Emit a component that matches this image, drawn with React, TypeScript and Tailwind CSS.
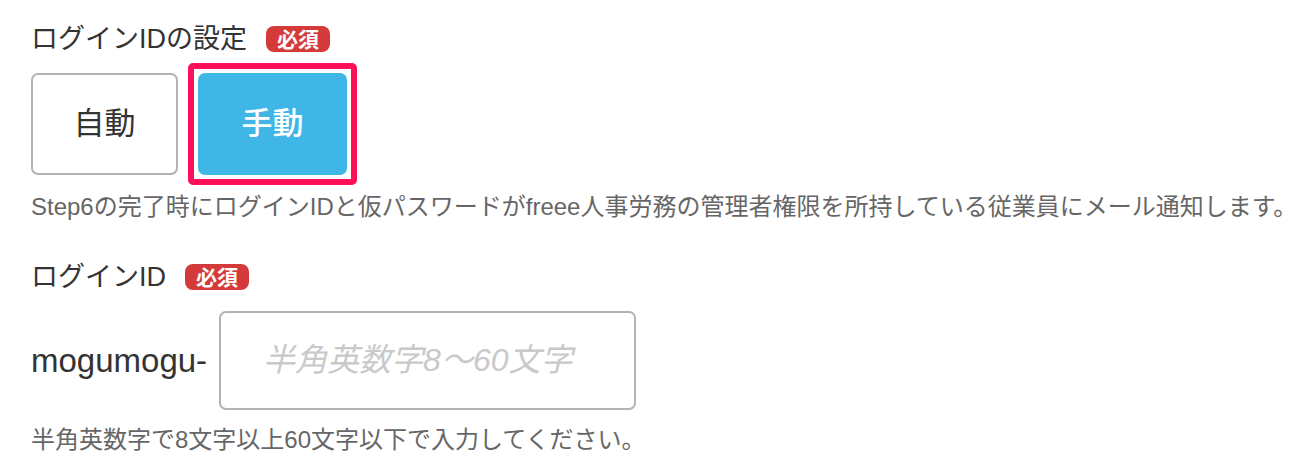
import React from "react";

const font = {
  fontFamily: '"Liberation Sans", "Noto Sans CJK JP", sans-serif',
};

function Required() {
  return (
    <span className="ml-[19px] inline-flex h-[26px] w-[64px] items-center justify-center rounded-[8px] bg-[#d43a3a] text-[21px] font-bold leading-none text-white">
      必須
    </span>
  );
}

export default function App() {
  return (
    <div
      className="min-h-[476px] w-[1314px] bg-white pl-[31px] pt-[20px] text-[#333333]"
      style={font}
    >
      {/* ログイン方法 */}
      <div className="flex h-[38px] items-center">
        <span className="text-[27px] leading-none">ログインIDの設定</span>
        <Required />
      </div>

      <div className="mt-[4px] flex h-[124px] items-center">
        <button className="flex h-[102px] w-[147px] items-center justify-center rounded-[7px] border-2 border-[#b3b3b3] bg-white text-[31px] text-[#333333]">
          自動
        </button>
        <div className="ml-[10px] rounded-[5px] border-[6px] border-[#fd0f5a] p-[4px]">
          <button className="flex h-[102px] w-[149px] items-center justify-center rounded-[7px] bg-[#40b6e7] text-[31px] font-medium text-white">
            手動
          </button>
        </div>
      </div>

      <p className="mt-[4px] flex h-[34px] items-center text-[24px] leading-none text-[#666666]">
        Step6の完了時にログインIDと仮パスワードがfreee人事労務の管理者権限を所持している従業員にメール通知します。
      </p>

      {/* ログインID入力 */}
      <div className="mt-[36px] flex h-[34px] items-center">
        <span className="text-[27px] leading-none">ログインID</span>
        <Required />
      </div>

      <div className="mt-[17px] flex h-[99px] items-center">
        <span className="text-[33px] leading-none text-[#333333]">mogumogu-</span>
        <input
          type="text"
          placeholder="半角英数字8〜60文字"
          className="ml-[12px] h-[99px] w-[417px] rounded-[7px] border-2 border-[#b3b3b3] bg-white pl-[42px] text-[32px] italic outline-none placeholder:text-[#c9c9c9]"
          style={font}
        />
      </div>

      <p className="mt-[13px] flex h-[34px] items-center text-[24px] leading-none text-[#666666]">
        半角英数字で8文字以上60文字以下で入力してください。
      </p>
    </div>
  );
}
